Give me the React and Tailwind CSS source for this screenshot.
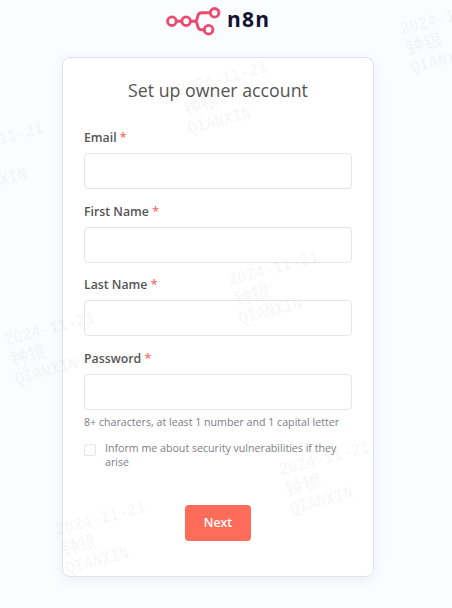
import React from "react";

const FIELDS = ["Email", "First Name", "Last Name", "Password"];

const MARKS = [
  { x: -46, y: 145 },
  { x: 5, y: 334 },
  { x: 56, y: 524 },
  { x: 178, y: 84 },
  { x: 229, y: 274 },
  { x: 280, y: 464 },
  { x: 401, y: 23 },
];

function Logo() {
  return (
    <div className="flex h-[30px] items-start pl-[166px]">
      <svg className="mt-[6px] shrink-0" width="56" height="30" viewBox="0 0 56 30" fill="none" stroke="#ea4b71" strokeWidth="2.9">
        <circle cx="5.9" cy="15.2" r="4.3" />
        <circle cx="20.2" cy="15.2" r="4.3" />
        <circle cx="48.6" cy="6.8" r="4.3" />
        <circle cx="42.6" cy="23.7" r="4.3" />
        <path d="M10.2 15.2H15.9M24.5 15.2H28.4C31 15.2 31.2 12.7 31.5 11C32 8 33.4 6.8 36 6.8H44.3M28.4 15.2C31 15.2 31.2 17.7 31.5 19.4C32 22.4 33.2 23.7 35.6 23.7H38.3" />
      </svg>
      <span className="ml-[5px] mt-[5px] font-['Open_Sans','Noto_Sans',sans-serif] text-[21px] font-bold leading-[28px] tracking-[1.2px] text-[#101330]">n8n</span>
    </div>
  );
}

function Field({ label }) {
  return (
    <>
      <label className="block h-[24px] text-[12.3px] font-semibold leading-[17px] text-[#555]">
        {label} <span className="text-[#ff6d5a]">*</span>
      </label>
      <input className="block h-[36px] w-full rounded-[4px] border border-[#e4e5ef] bg-white px-3 outline-none" />
    </>
  );
}

function Watermark({ x, y }) {
  return (
    <div
      className="pointer-events-none absolute origin-[0_10px] -rotate-[15deg] whitespace-pre font-['Liberation_Mono','Noto_Sans_CJK_SC',monospace] font-bold leading-[20px] text-black/[0.04]"
      style={{ left: x, top: y - 2 }}
    >
      <div className="h-5 origin-left scale-x-[0.84] text-[18.4px]">2024-11-21</div>
      <div className="ml-px h-5 text-[18px]">钟银</div>
      <div className="h-5 origin-left scale-x-[0.84] text-[18.4px]">QIANXIN</div>
    </div>
  );
}

export default function App() {
  return (
    <div className="relative h-[608px] w-[452px] overflow-hidden bg-[#fbfcfe] font-['Open_Sans','Noto_Sans',sans-serif]">
      <Logo />
      <main className="ml-[62px] mt-[27px] h-[520px] w-[312px] rounded-[8px] border border-[#e0e2ed] bg-white px-[21px] pt-[20px] shadow-[0_3px_14px_rgba(68,75,180,0.07)]">
        <h1 className="mb-[26px] text-center text-[17.75px] font-normal leading-[25px] text-[#555]">Set up owner account</h1>
        {FIELDS.map((label, i) => (
          <div key={label} className={i < 3 ? "h-[73.6px]" : "h-[60px]"}>
            <Field label={label} />
          </div>
        ))}
        <p className="mt-[5px] whitespace-nowrap text-[10.65px] leading-[15px] text-[#7d7d87]">
          8+ characters, at least 1 number and 1 capital letter
        </p>
        <div className="mt-[11px] flex items-start text-[10.65px] leading-[14px] text-[#7d7d87]">
          <span className="mr-[9px] mt-[3px] h-[12px] w-[12px] shrink-0 rounded-[2px] border border-[#e4e5ef] bg-white" />
          <span className="whitespace-nowrap">
            Inform me about security vulnerabilities if they
            <br />
            arise
          </span>
        </div>
        <button className="mx-auto mt-[36px] block h-[36px] w-[66px] rounded-[4px] bg-[#ff6d5a] text-[12.3px] font-semibold leading-[36px] text-white">
          Next
        </button>
      </main>
      {MARKS.map((m) => (
        <Watermark key={m.x} x={m.x} y={m.y} />
      ))}
    </div>
  );
}
